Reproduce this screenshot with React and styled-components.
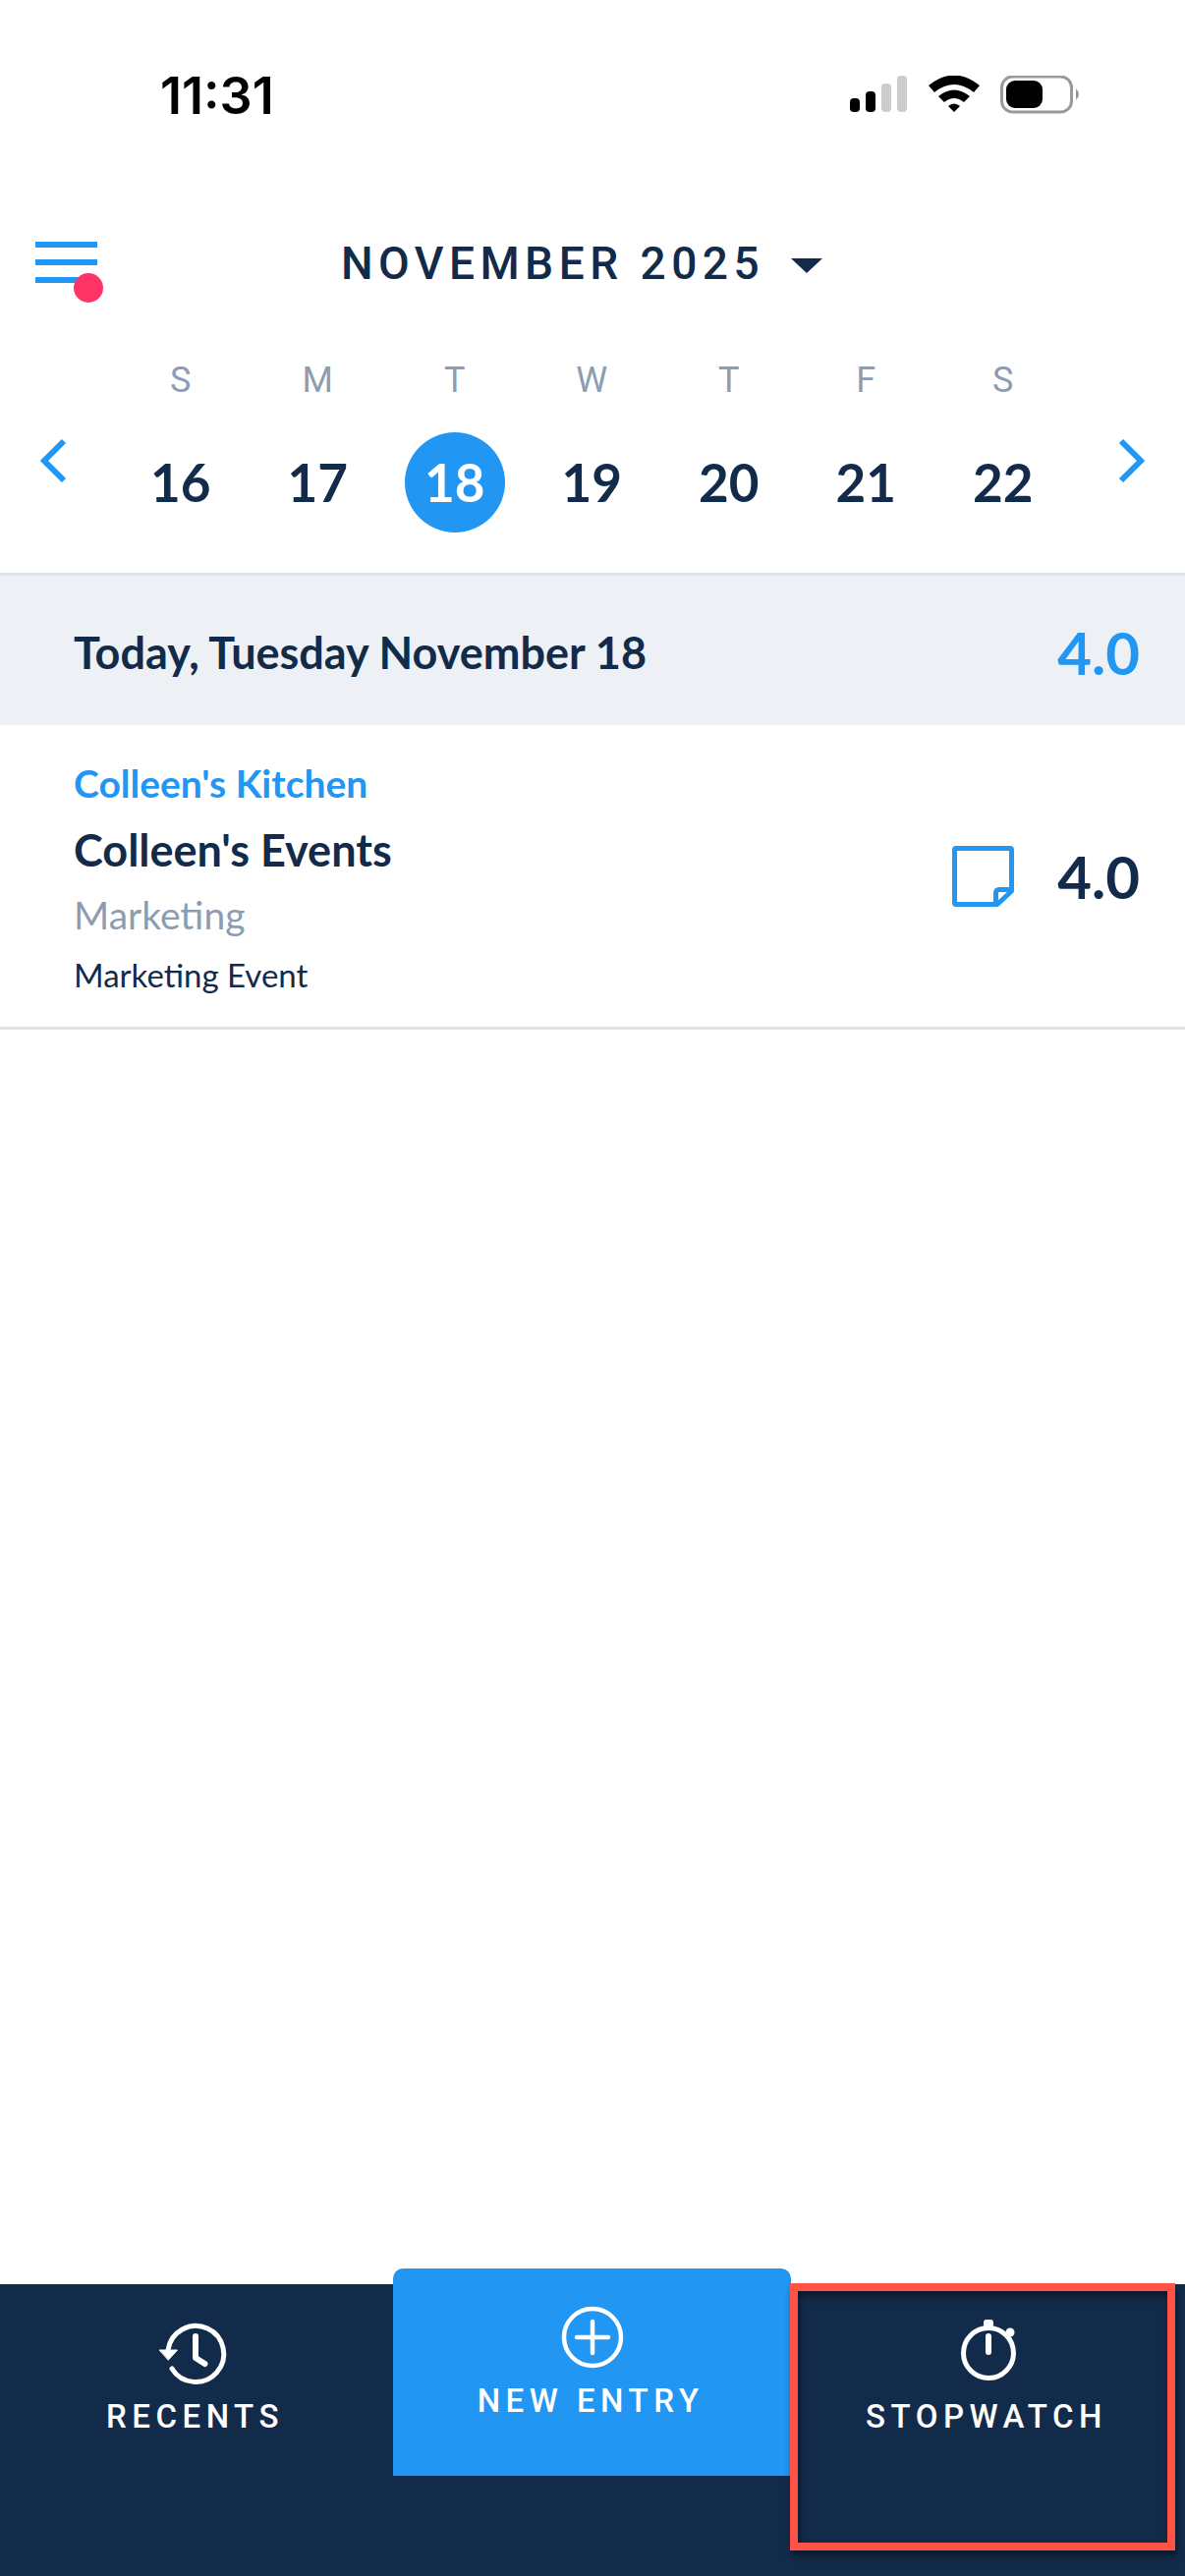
import React from 'react';
import styled, { createGlobalStyle } from 'styled-components';

const blue = '#2196f3';
const navy = '#132b4a';
const grey = '#8c9db1';

const GlobalStyle = createGlobalStyle`
    html, body {
        margin: 0;
        padding: 0;
        background: #fff;
    }
`;

const Page = styled.div`
    width: 1206px;
    height: 2622px;
    display: flex;
    flex-direction: column;
    overflow: hidden;
    background: #fff;
    font-family: Lato, "Liberation Sans", sans-serif;
    color: ${navy};
`;

const StatusBar = styled.div`
    height: 195px;
    box-sizing: border-box;
    padding: 74px 105px 0 163px;
    display: flex;
    justify-content: space-between;
    align-items: flex-start;
`;

const Clock = styled.span`
    font-family: Inter, sans-serif;
    font-weight: 600;
    font-size: 52px;
    line-height: 48px;
    color: #000;
`;

const StatusIcons = styled.svg`
    display: block;
    margin-top: 3px;
`;

const TitleRow = styled.div`
    height: 150px;
    box-sizing: border-box;
    padding: 0 36px;
    display: grid;
    grid-template-columns: 70px 1fr 70px;
    align-items: start;
`;

const MenuButton = styled.div`
    position: relative;
    width: 63px;
    margin-top: 51px;
    display: flex;
    flex-direction: column;
    gap: 12px;
`;

const MenuLine = styled.span`
    display: block;
    height: 6px;
    background: ${blue};
`;

const MenuDot = styled.span`
    position: absolute;
    left: 39px;
    top: 32px;
    width: 30px;
    height: 30px;
    border-radius: 50%;
    background: #ff3366;
`;

const MonthPicker = styled.div`
    display: flex;
    justify-content: center;
    align-items: center;
    gap: 27px;
    margin: 51px 0 0 -22px;
`;

const MonthLabel = styled.span`
    font-family: Roboto, sans-serif;
    font-weight: 500;
    font-size: 46px;
    line-height: 44px;
    letter-spacing: 5.5px;
`;

const Caret = styled.span`
    width: 0;
    height: 0;
    margin-top: 4px;
    border-left: 16px solid transparent;
    border-right: 16px solid transparent;
    border-top: 15px solid ${navy};
`;

const WeekGrid = styled.div`
    display: grid;
    grid-template-columns: 114px repeat(7, 139.5px) 1fr;
    justify-items: center;
    align-items: center;
`;

const DayLetter = styled.span`
    font-family: Roboto, sans-serif;
    font-size: 36px;
    line-height: 40px;
    color: ${grey};
    margin-top: 22px;
`;

const DayCircle = styled.span`
    width: 102px;
    height: 102px;
    box-sizing: border-box;
    margin-top: 33px;
    padding-bottom: 2px;
    border-radius: 50%;
    display: flex;
    align-items: center;
    justify-content: center;
    font-weight: 700;
    font-size: 53px;
    background: ${(p) => (p.$active ? blue : 'transparent')};
    color: ${(p) => (p.$active ? '#fff' : navy)};
`;

const Chevron = styled.svg`
    align-self: start;
    justify-self: start;
    margin-top: 39px;
    margin-left: ${(p) => (p.$right ? '46px' : '39px')};
`;

const DayHeader = styled.div`
    margin-top: 41px;
    height: 155px;
    box-sizing: border-box;
    border-top: 3px solid #dbe5ee;
    background: #edf1f6;
    padding: 3px 46px 0 75px;
    display: flex;
    justify-content: space-between;
    align-items: center;
`;

const DayTitle = styled.span`
    font-weight: 700;
    font-size: 45px;
`;

const Hours = styled.span`
    font-weight: 700;
    font-size: 60px;
    line-height: 70px;
    color: ${(p) => (p.$accent ? blue : navy)};
`;

const EntryRow = styled.div`
    height: 310px;
    box-sizing: border-box;
    border-bottom: 3px solid #dbe5ee;
    padding: 36px 46px 0 75px;
    display: flex;
    justify-content: space-between;
    align-items: center;
`;

const EntryInfo = styled.div`
    display: flex;
    flex-direction: column;
    align-self: flex-start;
`;

const Client = styled.span`
    font-weight: 700;
    font-size: 39px;
    line-height: 47px;
    color: ${blue};
`;

const Project = styled.span`
    font-weight: 700;
    font-size: 45px;
    line-height: 54px;
    margin-top: 17px;
`;

const Task = styled.span`
    font-size: 39px;
    line-height: 47px;
    margin-top: 16px;
    color: ${grey};
`;

const Note = styled.span`
    font-size: 33px;
    line-height: 40px;
    margin-top: 17px;
`;

const EntryRight = styled.div`
    display: flex;
    align-items: center;
    gap: 44px;
    margin-bottom: 36px;
`;

const TabBar = styled.div`
    position: relative;
    margin-top: auto;
    height: 297px;
    background: ${navy};
    display: grid;
    grid-template-columns: 400px 405px 1fr;
`;

const Tab = styled.div`
    display: flex;
    flex-direction: column;
    align-items: center;
    padding-top: 35px;
    color: #fff;
`;

const PrimaryTab = styled(Tab)`
    margin-top: -16px;
    height: 211px;
    box-sizing: border-box;
    padding-top: 38px;
    background: ${blue};
    border-radius: 10px 10px 0 0;
`;

const TabLabel = styled.span`
    font-family: Roboto, sans-serif;
    font-weight: 500;
    font-size: 33px;
    line-height: 40px;
    letter-spacing: 5.5px;
    margin-top: ${(p) => (p.$primary ? '13px' : '10px')};
    margin-right: 3px;
`;

const Highlight = styled.div`
    position: absolute;
    left: 804px;
    top: -1px;
    width: 392px;
    height: 272px;
    box-sizing: border-box;
    border: 8px solid #ff5346;
    box-shadow: 2px 5px 7px rgba(0, 0, 0, 0.45), inset 2px 5px 7px rgba(0, 0, 0, 0.45);
`;

const days = [
    ['S', 16],
    ['M', 17],
    ['T', 18],
    ['W', 19],
    ['T', 20],
    ['F', 21],
    ['S', 22],
];

const RecentsIcon = () => (
    <svg width="80" height="70" viewBox="0 0 80 70" fill="none" stroke="#fff" strokeWidth="5" strokeLinecap="round" strokeLinejoin="round">
        <path d="M11 32 A28.500 28.500 0 1 1 15 51" />
        <path d="M2.500 32 H20.500 L11.500 42 Z" fill="#fff" strokeWidth="1" />
        <path d="M39 18 V40 L48.500 46" strokeWidth="6" />
    </svg>
);

const PlusIcon = () => (
    <svg width="64" height="64" viewBox="0 0 64 64" fill="none" stroke="#fff" strokeWidth="4.500">
        <circle cx="32" cy="32" r="29" />
        <path d="M32 16 V48 M16 32 H48" strokeLinecap="round" />
    </svg>
);

const StopwatchIcon = () => (
    <svg width="80" height="70" viewBox="0 0 80 70" fill="none" stroke="#fff" strokeWidth="5" strokeLinecap="round">
        <circle cx="40" cy="35" r="25.500" />
        <rect x="35" y="1" width="10" height="8" rx="3" fill="#fff" stroke="none" />
        <circle cx="62" cy="14" r="4.500" fill="#fff" stroke="none" />
        <path d="M40 18 V34" strokeWidth="6" />
    </svg>
);

const App = () => {
    return (
        <Page>
            <GlobalStyle />
            <StatusBar>
                <Clock>11:31</Clock>
                <StatusIcons width="236" height="40" viewBox="0 0 236 40">
                    <rect x="0" y="23" width="10" height="14" rx="4" fill="#000" />
                    <rect x="16" y="16" width="10" height="21" rx="4" fill="#000" />
                    <rect x="32" y="8" width="10" height="29" rx="4" fill="#ccc" />
                    <rect x="48" y="0" width="10" height="37" rx="4" fill="#ccc" />
                    <path d="M80 10 Q106 -11 132 10 L126 17 Q106 1 86 17 Z" fill="#000" />
                    <path d="M90 21 Q106 8 122 21 L116 27 Q106 19 96 27 Z" fill="#000" />
                    <path d="M100 31 Q106 26 112 31 L106 37 Z" fill="#000" />
                    <rect x="154.500" y="1" width="71" height="36" rx="11" fill="none" stroke="#9a9a9a" strokeWidth="3" />
                    <rect x="159" y="5" width="37" height="28" rx="9" fill="#000" />
                    <path d="M230 13 Q236 19 230 25 Z" fill="#9a9a9a" />
                </StatusIcons>
            </StatusBar>
            <TitleRow>
                <MenuButton>
                    <MenuLine />
                    <MenuLine />
                    <MenuLine />
                    <MenuDot />
                </MenuButton>
                <MonthPicker>
                    <MonthLabel>NOVEMBER 2025</MonthLabel>
                    <Caret />
                </MonthPicker>
            </TitleRow>
            <WeekGrid>
                <span />
                {days.map(([letter], i) => (
                    <DayLetter key={i}>{letter}</DayLetter>
                ))}
                <span />
                <Chevron width="30" height="46" viewBox="0 0 30 46" fill="none" stroke={blue} strokeWidth="6">
                    <path d="M26 3 L6 23 L26 43" />
                </Chevron>
                {days.map(([, date]) => (
                    <DayCircle key={date} $active={date === 18}>{date}</DayCircle>
                ))}
                <Chevron $right width="30" height="46" viewBox="0 0 30 46" fill="none" stroke={blue} strokeWidth="6">
                    <path d="M4 3 L24 23 L4 43" />
                </Chevron>
            </WeekGrid>
            <DayHeader>
                <DayTitle>Today, Tuesday November 18</DayTitle>
                <Hours $accent>4.0</Hours>
            </DayHeader>
            <EntryRow>
                <EntryInfo>
                    <Client>Colleen's Kitchen</Client>
                    <Project>Colleen's Events</Project>
                    <Task>Marketing</Task>
                    <Note>Marketing Event</Note>
                </EntryInfo>
                <EntryRight>
                    <svg width="63" height="62" viewBox="0 0 63 62" fill="none" stroke={blue} strokeWidth="5" strokeLinejoin="round">
                        <path d="M4 2.500 H59 Q60.500 2.500 60.500 4 V46 L46 59.500 H4 Q2.500 59.500 2.500 58 V4 Q2.500 2.500 4 2.500 Z" />
                        <path d="M44.500 59 V48 Q44.500 44.500 48 44.500 H60" />
                    </svg>
                    <Hours>4.0</Hours>
                </EntryRight>
            </EntryRow>
            <TabBar>
                <Tab>
                    <RecentsIcon />
                    <TabLabel>RECENTS</TabLabel>
                </Tab>
                <PrimaryTab>
                    <PlusIcon />
                    <TabLabel $primary>NEW ENTRY</TabLabel>
                </PrimaryTab>
                <Tab>
                    <StopwatchIcon />
                    <TabLabel>STOPWATCH</TabLabel>
                </Tab>
                <Highlight />
            </TabBar>
        </Page>
    );
};

export default App;
